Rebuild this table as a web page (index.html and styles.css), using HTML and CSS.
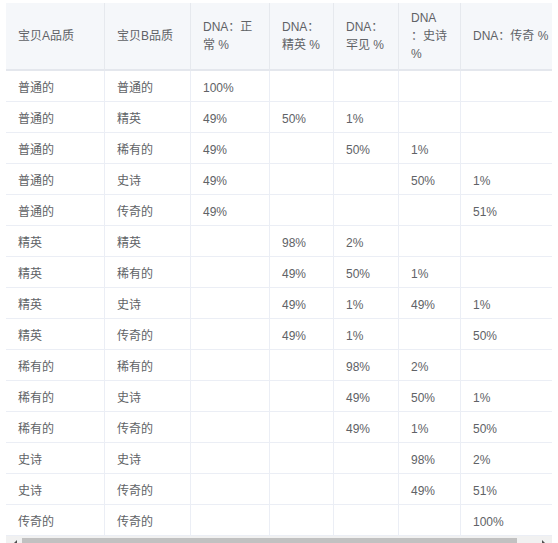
FILE: index.html
```html
<!DOCTYPE html>
<html lang="zh">
<head>
<meta charset="utf-8">
<title>DNA 品质表</title>
<link rel="stylesheet" href="styles.css">
</head>
<body>
<div class="table-wrap">
  <table class="dna-table">
    <colgroup>
      <col class="c1"><col class="c2"><col class="c3"><col class="c4"><col class="c5"><col class="c6"><col class="c7">
    </colgroup>
    <thead>
      <tr>
        <th>宝贝A品质</th>
        <th>宝贝B品质</th>
        <th>DNA：正常 %</th>
        <th>DNA：精英 %</th>
        <th>DNA：罕见 %</th>
        <th class="th-tight">DNA：史诗 %</th>
        <th>DNA：传奇 %</th>
      </tr>
    </thead>
    <tbody>
      <tr><td>普通的</td><td>普通的</td><td>100%</td><td></td><td></td><td></td><td></td></tr>
      <tr><td>普通的</td><td>精英</td><td>49%</td><td>50%</td><td>1%</td><td></td><td></td></tr>
      <tr><td>普通的</td><td>稀有的</td><td>49%</td><td></td><td>50%</td><td>1%</td><td></td></tr>
      <tr><td>普通的</td><td>史诗</td><td>49%</td><td></td><td></td><td>50%</td><td>1%</td></tr>
      <tr><td>普通的</td><td>传奇的</td><td>49%</td><td></td><td></td><td></td><td>51%</td></tr>
      <tr><td>精英</td><td>精英</td><td></td><td>98%</td><td>2%</td><td></td><td></td></tr>
      <tr><td>精英</td><td>稀有的</td><td></td><td>49%</td><td>50%</td><td>1%</td><td></td></tr>
      <tr><td>精英</td><td>史诗</td><td></td><td>49%</td><td>1%</td><td>49%</td><td>1%</td></tr>
      <tr><td>精英</td><td>传奇的</td><td></td><td>49%</td><td>1%</td><td></td><td>50%</td></tr>
      <tr><td>稀有的</td><td>稀有的</td><td></td><td></td><td>98%</td><td>2%</td><td></td></tr>
      <tr><td>稀有的</td><td>史诗</td><td></td><td></td><td>49%</td><td>50%</td><td>1%</td></tr>
      <tr><td>稀有的</td><td>传奇的</td><td></td><td></td><td>49%</td><td>1%</td><td>50%</td></tr>
      <tr><td>史诗</td><td>史诗</td><td></td><td></td><td></td><td>98%</td><td>2%</td></tr>
      <tr><td>史诗</td><td>传奇的</td><td></td><td></td><td></td><td>49%</td><td>51%</td></tr>
      <tr><td>传奇的</td><td>传奇的</td><td></td><td></td><td></td><td></td><td>100%</td></tr>
    </tbody>
  </table>
</div>
<div class="hscroll" aria-hidden="true">
  <div class="hs-btn hs-left"><span class="arrow arrow-left"></span></div>
  <div class="hs-track"><div class="hs-thumb"></div></div>
  <div class="hs-btn hs-right"><span class="arrow arrow-right"></span></div>
</div>
</body>
</html>
```

FILE: styles.css
```css
html, body {
  margin: 0;
  padding: 0;
  overflow: hidden;
  background: #ffffff;
}

body {
  font-family: "Liberation Sans", "Noto Sans CJK SC", sans-serif;
  font-size: 12px;
  color: #606266;
}

.table-wrap {
  margin: 3px 6px 0 6px;
  width: 546px;
  overflow: hidden;
}

.dna-table {
  table-layout: fixed;
  width: 569px;
  border-collapse: separate;
  border-spacing: 0;
  text-spacing-trim: space-all;
}

.c1 { width: 99px; }
.c2 { width: 86px; }
.c3 { width: 79px; }
.c4 { width: 64px; }
.c5 { width: 65px; }
.c6 { width: 62px; }
.c7 { width: 114px; }

.dna-table th,
.dna-table td {
  box-sizing: border-box;
  padding: 0 12px;
  border-right: 1px solid #ebeef5;
  text-align: left;
  vertical-align: middle;
}

.dna-table th {
  background: #f5f7fa;
  font-weight: normal;
  color: #606266;
  line-height: 18px;
  height: 68px;
  padding-top: 6px;
  padding-bottom: 6px;
  border-bottom: 2px solid #e4e7ed;
  border-right-color: #e6e9ee;
}

.dna-table th.th-tight {
  line-break: anywhere;
}

.dna-table td {
  height: 31px;
  line-height: 18px;
  padding-top: 4px;
  padding-bottom: 0;
  border-bottom: 1px solid #ebeef5;
}

.dna-table th:last-child,
.dna-table td:last-child {
  border-right: none;
}

/* horizontal scrollbar (drawn) */
.hscroll {
  display: flex;
  width: 546px;
  height: 15px;
  margin-left: 6px;
  background: #f1f1f1;
}

.hs-btn {
  width: 15px;
  flex: none;
  display: flex;
  align-items: center;
  justify-content: center;
}

.arrow {
  width: 0;
  height: 0;
  border-top: 4px solid transparent;
  border-bottom: 4px solid transparent;
}

.arrow-left {
  border-right: 4px solid #505050;
  margin-left: 2px;
}

.arrow-right {
  border-left: 4px solid #505050;
  margin-right: 1px;
}

.hs-track {
  flex: 1;
  padding: 2px 0 2px 1px;
  display: flex;
}

.hs-thumb {
  width: 495px;
  background: #c1c1c1;
}
```
